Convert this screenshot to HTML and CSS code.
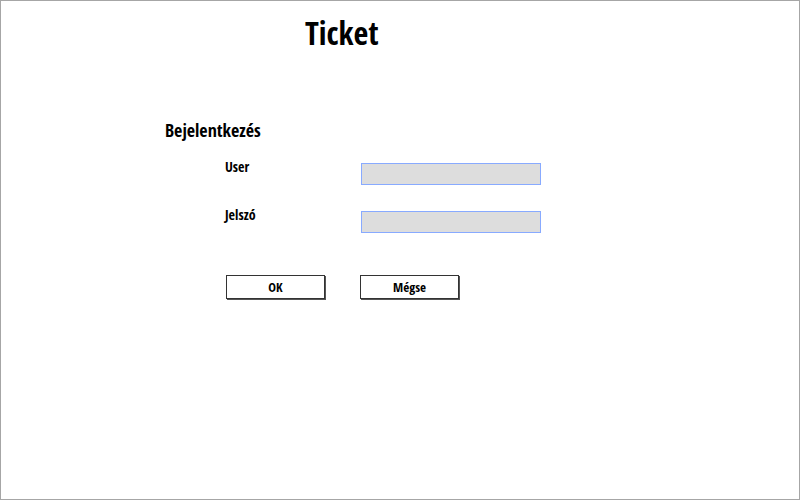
FILE: index.html
```html
<!DOCTYPE html>
<html lang="hu">
<head>
<meta charset="utf-8">
<meta name="viewport" content="width=device-width, initial-scale=1">
<title>Ticket</title>
<link rel="stylesheet" href="styles.css">
</head>
<body>
<main class="page">
  <h1 class="title">Ticket</h1>
  <form class="login">
    <h2 class="heading">Bejelentkezés</h2>
    <div class="fields">
      <label class="label" for="user">User</label>
      <input class="input" id="user" type="text" autocomplete="username">
      <label class="label" for="password">Jelszó</label>
      <input class="input" id="password" type="password" autocomplete="current-password">
      <div class="actions">
        <button class="button" type="submit">OK</button>
        <button class="button" type="button">Mégse</button>
      </div>
    </div>
  </form>
</main>
</body>
</html>
```
FILE: styles.css
```css
* {
  box-sizing: border-box;
}

body {
  margin: 0;
  background: #fff;
  color: #000;
  font-family: "Open Sans Condensed", "Open Sans", sans-serif;
  font-weight: 700;
}

.page {
  min-height: 100vh;
  padding: 12px 164px;
  border: 1px solid #a6a6a6;
}

.title {
  margin: 0 0 64px 140px;
  font-size: 32px;
  line-height: 40px;
}

.heading {
  margin: 0;
  font-size: 18px;
  line-height: 26px;
}

.fields {
  display: grid;
  grid-template-columns: 136px minmax(0, 180px);
  row-gap: 26px;
  margin: 20px 0 0 60px;
}

.label {
  font-size: 14px;
  line-height: 8px;
}

.input {
  width: 100%;
  height: 22px;
  padding: 0 4px;
  border: 1px solid #88aaff;
  border-radius: 0;
  background: #ddd;
  font: inherit;
  font-size: 14px;
}

.actions {
  display: flex;
  grid-column: 1 / -1;
  gap: 35px;
  margin: 16px 0 0 1px;
}

.button {
  width: 99px;
  height: 24px;
  padding: 0;
  border: 1px solid #333;
  border-radius: 0;
  background: #fff;
  box-shadow: 1px 1px 0 #555;
  color: #000;
  font: inherit;
  font-size: 13px;
}
```
